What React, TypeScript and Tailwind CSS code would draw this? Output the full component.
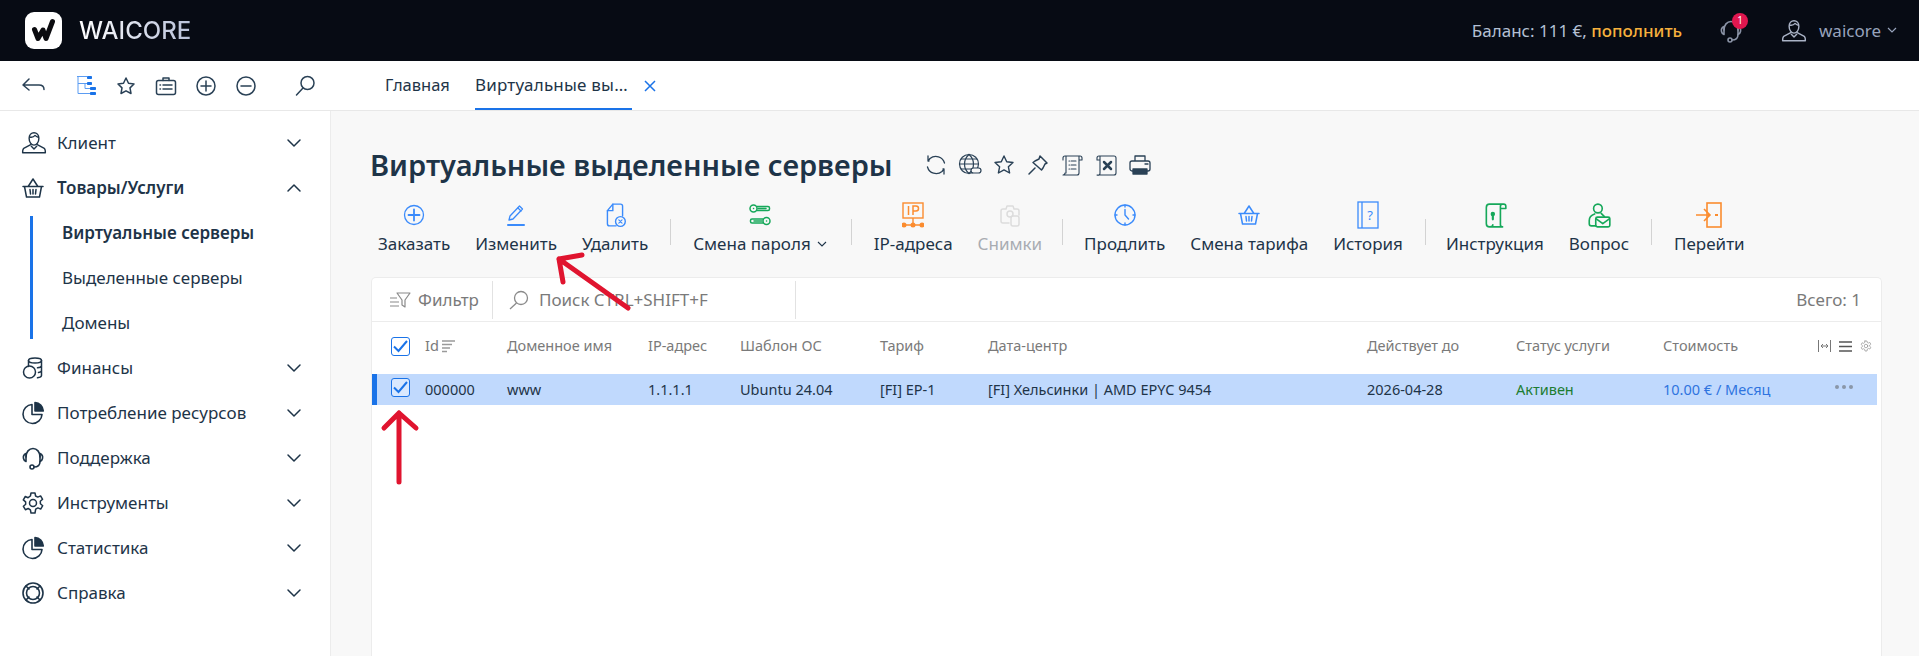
import React from "react";

const S = ({ size = 24, vb = "0 0 24 24", sw = 1.5, className = "", children }: { size?: number; vb?: string; sw?: number; className?: string; children: React.ReactNode }) => (
  <svg width={size} height={size} viewBox={vb} fill="none" stroke="currentColor" strokeWidth={sw} strokeLinecap="round" strokeLinejoin="round" className={className}>
    {children}
  </svg>
);

const Chevron = ({ up = false }: { up?: boolean }) => (
  <svg width="16" height="10" viewBox="0 0 16 10" fill="none" stroke="#1e3448" strokeWidth="1.5" strokeLinecap="round" strokeLinejoin="round">
    <path d={up ? "M2 8 8 2l6 6" : "M2 2l6 6 6-6"} />
  </svg>
);

const UserIcon = ({ size = 26 }: { size?: number }) => (
  <S size={size} sw={1.300}>
    <path d="M7.500 7.500C7.500 4.500 9.500 2.500 12 2.500s4.500 2 4.500 5c0 3.500-2 6.500-4.500 6.500s-4.500-3-4.500-6.500Z" />
    <path d="M8 6.500c2 .5 4-.3 5-1.500 .8 1 2 1.500 3 1.700" />
    <path d="M9 13.500 2.500 17c-.8.500-1 2-1 4h21c0-2-.2-3.500-1-4L15 13.500" />
    <path d="M9.500 15l2.500 2.500 2.500-2.500" />
  </S>
);

const BasketIcon = ({ size = 24 }: { size?: number }) => (
  <S size={size} sw={1.500}>
    <path d="M2 10.500h20M3.500 10.500 5.500 21h13l2-10.500" />
    <path d="M7.500 10 12 3l4.500 7" />
    <path d="M9 13.500l.5 4.500M12 13.500V18M15 13.500l-.5 4.500" />
  </S>
);

const Coins = () => (
  <S size={24} sw={1.500}>
    <ellipse cx="14" cy="4.500" rx="6.500" ry="2.500" />
    <path d="M7.500 4.500v6M20.500 4.500v15c0 1.200-2 2-4 2.300M20.500 9.500c0 1-1.500 2-4 2.300M20.500 14.500c0 1-1.500 1.700-3 2" />
    <circle cx="8.500" cy="16" r="6" />
  </S>
);

const PieIcon = () => (
  <S size={24} sw={1.600}>
    <path d="M11 3.500A9.500 9.500 0 1 0 21 13.500H11Z" />
    <path d="M14 1.500c4.500.3 8 4 8.300 8.500H14Z" fill="currentColor" />
  </S>
);

const Headset = ({ size = 24 }: { size?: number }) => (
  <S size={size} sw={1.600}>
    <path d="M5 11C5 6 8 2.500 12 2.500S19 6 19 11" />
    <path d="M5 7.500c-2 1-3 3-2.500 5 .3 1.500 1.200 2.500 2.500 3V7.500ZM19 7.500c2 1 3 3 2.500 5-.3 1.500-1.200 2.500-2.500 3V7.500Z" />
    <path d="M19 15.500c0 3.500-2.500 5.500-6 5.500" />
    <circle cx="11" cy="21" r="2" />
  </S>
);

const Gear = ({ size = 24, sw = 1.500 }: { size?: number; sw?: number }) => (
  <S size={size} sw={sw}>
    <circle cx="12" cy="12" r="3.500" />
    <path d="M10 2h4l.6 3 2.200 1.100 2.800-1.200 2 3.400-2.300 2 .1 2.400 2.300 2-2 3.400-2.800-1.200-2.200 1.300L14 22h-4l-.6-3.200-2.200-1.300-2.800 1.200-2-3.400 2.300-2-.1-2.400-2.300-2 2-3.400 2.800 1.200L9.400 5 10 2Z" />
  </S>
);

const Ring = () => (
  <S size={24} sw={1.600}>
    <circle cx="12" cy="12" r="10" />
    <circle cx="12" cy="12" r="6.500" />
    <path d="M5 5l3 3M19 5l-3 3M5 19l3-3M19 19l-3-3" />
  </S>
);

const NavItem = ({ icon, label, open = false, bold = false }: { icon: React.ReactNode; label: string; open?: boolean; bold?: boolean }) => (
  <div className="flex h-[45px] items-center pl-[21px] pr-[28px] text-[#1e3448]">
    <div className="flex w-[36px] shrink-0 items-center">{icon}</div>
    <span className={`flex-1 text-[17px] ${bold ? "font-semibold" : ""}`}>{label}</span>
    <Chevron up={open} />
  </div>
);

const Sidebar = () => (
  <aside className="w-[331px] shrink-0 border-r border-[#ececec] bg-white pt-[9px]">
    <NavItem icon={<UserIcon />} label="Клиент" />
    <NavItem icon={<BasketIcon />} label="Товары/Услуги" open bold />
    <div className="mb-[6px] ml-[30px] mt-[6px] flex flex-col gap-[12px] border-l-[3px] border-[#1a73e8] pl-[29px] text-[17px] text-[#1e3448]">
      <div className="flex h-[33px] items-center font-semibold">Виртуальные серверы</div>
      <div className="flex h-[33px] items-center">Выделенные серверы</div>
      <div className="flex h-[33px] items-center">Домены</div>
    </div>
    <NavItem icon={<Coins />} label="Финансы" />
    <NavItem icon={<PieIcon />} label="Потребление ресурсов" />
    <NavItem icon={<Headset />} label="Поддержка" />
    <NavItem icon={<Gear />} label="Инструменты" />
    <NavItem icon={<PieIcon />} label="Статистика" />
    <NavItem icon={<Ring />} label="Справка" />
  </aside>
);

const TopBar = () => (
  <header className="flex h-[61px] items-center bg-[#070b14] pl-[25px] pr-[22px]">
    <svg width="37" height="37" viewBox="0 0 37 37">
      <rect width="37" height="37" rx="9" fill="#fff" />
      <path d="M9.500 17.500 13 26.500 18 18l3 8.500 6.500-17" fill="none" stroke="#0b0b0f" strokeWidth="5" strokeLinejoin="round" strokeLinecap="round" />
    </svg>
    <span className="ml-[17px] bg-gradient-to-r from-white to-[#b9c2da] bg-clip-text text-[24px] font-medium text-transparent [font-family:Inter,sans-serif]">WAICORE</span>
    <div className="ml-auto flex items-center">
      <span className="text-[17px] text-[#b4c0d4]">
        Баланс: 111 €, <span className="font-medium text-[#f6b13d]">пополнить</span>
      </span>
      <div className="relative ml-[37px] text-[#8a93a6]">
        <Headset size={24} />
        <span className="absolute -right-[5px] -top-[6px] flex h-[16px] w-[16px] items-center justify-center rounded-full bg-[#e0174f] text-[10px] text-white">1</span>
      </div>
      <div className="ml-[38px] text-[#aab3c6]"><UserIcon size={26} /></div>
      <span className="ml-[12px] text-[17px] text-[#97a3bc]">waicore</span>
      <svg className="ml-[6px]" width="10" height="7" viewBox="0 0 10 7" fill="none" stroke="#97a3bc" strokeWidth="1.200"><path d="M1 1l4 4 4-4" /></svg>
    </div>
  </header>
);

const NavBar = () => (
  <div className="flex h-[50px] items-center border-b border-[#e8e8e8] bg-white pl-[22px] text-[#2a4156]">
    <S size={24} sw={1.500}><path d="M7 5 1 11l6 5M1 11h16c3 0 5 1.500 5 4.500" /></S>
    <div className="ml-[28px] flex w-[24px] justify-center">
      <svg width="20" height="19" viewBox="0 0 20 19" fill="none" stroke="#5b9cf2" strokeWidth="1">
        <path d="M1 .5h10M2 .5v17h12M2 7.500h9M9 7.500v5h5" />
        <rect x="11" y="0" width="5" height="3" rx=".8" fill="#1a73e8" stroke="none" />
        <rect x="11" y="6" width="5" height="3" rx=".8" fill="#1a73e8" stroke="none" />
        <rect x="14" y="11" width="6" height="3" rx=".8" fill="#1a73e8" stroke="none" />
        <rect x="14" y="16" width="6" height="3" rx=".8" fill="#1a73e8" stroke="none" />
      </svg>
    </div>
    <div className="ml-[16px]"><S size={24} sw={1.500}><path d="M12 4l2.500 5.300 5.500.7-4 3.900 1 5.600-5-2.700-5 2.700 1-5.600-4-3.900 5.500-.7Z" /></S></div>
    <div className="ml-[16px]"><S size={24} sw={1.500}><rect x="2.500" y="6.500" width="19" height="14" rx="2" /><path d="M9 6.500V4h6v2.500M6 11h.5M9 11h9M6 15h.5M9 15h9" /></S></div>
    <div className="ml-[16px]"><S size={24} sw={1.500}><circle cx="12" cy="12" r="9" /><path d="M12 7v10M7 12h10" /></S></div>
    <div className="ml-[16px]"><S size={24} sw={1.500}><circle cx="12" cy="12" r="9" /><path d="M7 12h10" /></S></div>
    <div className="ml-[35px]"><S size={24} sw={1.500}><circle cx="14.500" cy="9" r="6.500" /><path d="M10 14 3.500 21" /></S></div>
    <div className="ml-[68px] flex h-full items-stretch text-[16.500px]">
      <div className="flex items-center text-[#1e3448]">Главная</div>
      <div className="ml-[25px] flex w-[157px] items-center whitespace-nowrap border-b-2 border-[#1a73e8] text-[17px] tracking-[0.2px] text-[#1e3448]">Виртуальные вы…</div>
      <div className="ml-[12px] flex items-center text-[#1a73e8]">
        <svg width="12" height="12" viewBox="0 0 12 12" stroke="currentColor" strokeWidth="1.500"><path d="M1 1l10 10M11 1 1 11" /></svg>
      </div>
    </div>
  </div>
);

const B = "#3b8bfb";
const G = "#16a85a";
const O = "#fb8c2f";

const Tool = ({ icon, label, muted = false, chev = false }: { icon: React.ReactNode; label: string; muted?: boolean; chev?: boolean }) => (
  <div className="flex flex-col items-center">
    <div className="flex h-[28px] items-center justify-center">{icon}</div>
    <div className={`mt-[3px] flex items-center gap-[6px] text-[17px] leading-[24px] ${muted ? "text-[#a8acb2]" : "text-[#1e3448]"}`}>
      {label}
      {chev && <svg width="10" height="7" viewBox="0 0 10 7" fill="none" stroke="#1e3448" strokeWidth="1.100"><path d="M1 1l4 4 4-4" /></svg>}
    </div>
  </div>
);

const Sep = ({ m = "mx-[-3px]" }: { m?: string }) => <div className={`${m} mt-[18px] h-[26px] w-px bg-[#d3d3d3]`} />;

const Toolbar = () => (
  <div className="mt-[18px] flex gap-[25px] pl-[7px]">
    <Tool label="Заказать" icon={<span style={{ color: B }}><S size={24} sw={1.300}><circle cx="12" cy="12" r="9.500" /><path d="M12 6.500v11M6.500 12h11" strokeWidth="1.800" /></S></span>} />
    <Tool label="Изменить" icon={<span style={{ color: B }}><S size={24} sw={1.300}><path d="M5 17l1-4L15.500 3l3 3L9 16Z" /><path d="M14 5l3 3" /><path d="M4 22h16" strokeWidth="2" /></S></span>} />
    <Tool label="Удалить" icon={<span style={{ color: B }}><S size={26} sw={1.300}><path d="M13 22H7a2 2 0 0 1-2-2V8l5-6h7a2 2 0 0 1 2 2v9" /><path d="M5 8h5V2" /><circle cx="17" cy="18" r="4.500" /><path d="M15.500 16.500l3 3M18.500 16.500l-3 3" strokeWidth="1" /></S></span>} />
    <Sep />
    <Tool label="Смена пароля" chev icon={<span style={{ color: G }}><S size={24} sw={1.500}><circle cx="5.500" cy="5.500" r="3.500" /><path d="M9 3.500h11a1.500 1.500 0 0 1 1.500 1.500v1a1.500 1.500 0 0 1-1.500 1.500H9M5.500 5.500h.1M10 5.500h8" /><circle cx="18.500" cy="18" r="3.500" /><path d="M15 16H4a1.500 1.500 0 0 0-1.500 1.500v1A1.500 1.500 0 0 0 4 20h11M18.500 18h.1M6 18h8" /></S></span>} />
    <Sep m="ml-[-1px] mr-[-3px]" />
    <Tool label="IP-адреса" icon={
      <svg width="22" height="26" viewBox="0 0 22 26" fill="none" stroke={O} strokeWidth="1.400">
        <rect x="1" y="1" width="20" height="15" />
        <path d="M6.500 4v9M11 13V4h3a2.500 2.500 0 0 1 0 5h-3" strokeWidth="1.500" />
        <path d="M11 16v7M1 23h20" />
        <circle cx="2" cy="23" r="1.800" fill={O} /><circle cx="11" cy="23" r="1.800" fill={O} /><circle cx="20" cy="23" r="1.800" fill={O} />
      </svg>} />
    <Tool label="Снимки" muted icon={<span className="text-[#dcdcdc]"><S size={24} sw={1.500}><path d="M11 20H5a2 2 0 0 1-2-2V8a2 2 0 0 1 2-2h3l1-3h6l1 3h3a2 2 0 0 1 2 2v4" /><circle cx="12" cy="11" r="3" /><rect x="13" y="13" width="8" height="10" rx="2" /></S></span>} />
    <Sep m="ml-[-5px] mr-[-4px]" />
    <Tool label="Продлить" icon={<span style={{ color: B }}><S size={24} sw={1.400}><circle cx="12" cy="12" r="10" /><path d="M12 6.500V12l3.500 4M12 2v2M12 20v2M2 12h2M20 12h2" /></S></span>} />
    <Tool label="Смена тарифа" icon={<span style={{ color: B }}><BasketIcon size={24} /></span>} />
    <Tool label="История" icon={
      <svg width="22" height="28" viewBox="0 0 22 28" fill="none" stroke={B} strokeWidth="1.300">
        <rect x="1" y="1" width="20" height="26" /><path d="M5 1v26" />
        <text x="13" y="19" fontSize="13" textAnchor="middle" fill={B} stroke="none" fontFamily="Noto Sans">?</text>
      </svg>} />
    <Sep m="ml-[-3px] mr-[-5px]" />
    <Tool label="Инструкция" icon={<span style={{ color: G }}><S size={26} sw={1.500}><path d="M20 2H7a3 3 0 0 0-3 3v15a3 3 0 0 0 3 3h12a2 2 0 0 1-2-2V4a2 2 0 0 1 2-2Zm0 0a2 2 0 0 1 2 2v2h-5M7 23c2 0 3-1 3-2" /><circle cx="10" cy="11" r="1.300" fill="currentColor" /><path d="M10 12v4" strokeWidth="2" /></S></span>} />
    <Tool label="Вопрос" icon={<span style={{ color: G }}><S size={26} sw={1.500}><circle cx="11" cy="6" r="4" /><path d="M8 11c-3 1-5 3-5 6v3a2 2 0 0 0 2 2h4M14 10.500l3 3" /><rect x="9" y="14" width="13" height="9" rx="1.500" /><path d="M9.500 15.500 15.500 20l6-4.500" /></S></span>} />
    <Sep />
    <Tool label="Перейти" icon={
      <svg width="28" height="26" viewBox="0 0 28 26" fill="none" stroke={O} strokeWidth="1.600">
        <rect x="12" y="1" width="14" height="24" /><path d="M1 13h14M9 7l6 6-6 6" />
        <path d="M20 13h3" strokeWidth="2" />
      </svg>} />
  </div>
);

const GRID = "grid grid-cols-[53px_82px_141px_92px_140px_108px_379px_149px_147px_1fr_70px] items-center";

const Check = () => (
  <div className="flex h-[19px] w-[19px] items-center justify-center rounded-[3px] border border-[#1a73e8] bg-white/40">
    <svg width="15" height="13" viewBox="0 0 15 13" fill="none" stroke="#1a73e8" strokeWidth="2"><path d="M1 6.500 5.500 11 14 1" /></svg>
  </div>
);

const Table = () => (
  <div className="mt-[21px] flex-1 rounded-t-[5px] border border-b-0 border-[#ececec] bg-white">
    <div className="flex h-[44px] items-center border-b border-[#ececec] text-[17px] text-[#7a7a7a]">
      <svg className="ml-[18px]" width="21" height="20" viewBox="0 0 21 20" fill="none" stroke="#8a8a8a" strokeWidth="1.200" strokeLinejoin="round">
        <path d="M7 3h13l-5 7v7l-3-2v-5ZM0 8h7M0 12h9M0 16h9" />
      </svg>
      <span className="ml-[7px]">Фильтр</span>
      <div className="ml-[13px] h-[38px] w-px bg-[#e2e2e2]" />
      <svg className="ml-[16px]" width="20" height="20" viewBox="0 0 20 20" fill="none" stroke="#8a8a8a" strokeWidth="1.300">
        <circle cx="12" cy="8" r="6.500" /><path d="M7.500 13 1 19" />
      </svg>
      <span className="ml-[10px] w-[256px] whitespace-nowrap">Поиск CTRL+SHIFT+F</span>
      <div className="h-[38px] w-px bg-[#e2e2e2]" />
      <span className="ml-auto mr-[20px]">Всего: 1</span>
    </div>
    <div className={`${GRID} h-[52px] pb-[4px] text-[14.500px] text-[#7a7a7a]`}>
      <div className="pl-[19px]"><Check /></div>
      <div className="flex items-center gap-[3px]">
        Id
        <svg width="13" height="13" viewBox="0 0 13 13" stroke="#9a9a9a" strokeWidth="1.300"><path d="M0 1h13M0 4.500h10M0 8h8M0 11.500h5" /></svg>
      </div>
      <div>Доменное имя</div>
      <div>IP-адрес</div>
      <div>Шаблон ОС</div>
      <div>Тариф</div>
      <div>Дата-центр</div>
      <div>Действует до</div>
      <div>Статус услуги</div>
      <div>Стоимость</div>
      <div className="flex items-center justify-end gap-[8px] pr-[9px]">
        <svg width="13" height="12" viewBox="0 0 13 12" fill="none" stroke="#777" strokeWidth="1"><path d="M.5 0v12M12.500 0v12M3 6h7M3 6l2-2M3 6l2 2M10 6 8 4M10 6 8 8" /></svg>
        <svg width="13" height="11" viewBox="0 0 13 11" stroke="#555" strokeWidth="1.400"><path d="M0 1h13M0 5.500h13M0 10h13" /></svg>
        <span className="text-[#888]"><Gear size={12} sw={1.300} /></span>
      </div>
    </div>
    <div className={`${GRID} mr-[4px] h-[31px] border-l-[5px] border-[#1a73e8] bg-[#c0d9fd] text-[14.500px] text-[#1e3448]`}>
      <div className="-ml-[5px] -mt-[4px] pl-[19px]"><Check /></div>
      <div className="-ml-[5px]">000000</div>
      <div className="-ml-[5px]">www</div>
      <div className="-ml-[5px]">1.1.1.1</div>
      <div className="-ml-[5px]">Ubuntu 24.04</div>
      <div className="-ml-[5px]">[FI] EP-1</div>
      <div className="-ml-[5px]">[FI] Хельсинки | AMD EPYC 9454</div>
      <div className="-ml-[5px]">2026-04-28</div>
      <div className="-ml-[5px] text-[#1d7d32]">Активен</div>
      <div className="-ml-[5px] whitespace-nowrap text-[#2f74e0]">10.00 € / Месяц</div>
      <div className="-mt-[5px] flex justify-end gap-[3px] pr-[24px]">
        <i className="h-[4px] w-[4px] rounded-full bg-[#8a97a8]" />
        <i className="h-[4px] w-[4px] rounded-full bg-[#8a97a8]" />
        <i className="h-[4px] w-[4px] rounded-full bg-[#8a97a8]" />
      </div>
    </div>
  </div>
);

export default function App() {
  return (
    <div className="relative flex h-[656px] w-[1919px] flex-col overflow-hidden bg-white [font-family:'Noto_Sans',sans-serif]">
      <TopBar />
      <NavBar />
      <div className="flex min-h-0 flex-1">
        <Sidebar />
        <main className="flex flex-1 flex-col bg-[#f8f8f8] pl-[40px] pr-[37px] pt-[36px]">
          <div className="flex items-center">
            <h1 className="-ml-[1px] text-[29px] font-semibold leading-[36px] text-[#1e3448]">Виртуальные выделенные серверы</h1>
            <div className="ml-[31px] flex items-center gap-[10px] text-[#2a4156]">
              <S size={24} sw={1.300}><path d="M20.500 10A9 9 0 0 0 6 5.500L4 8M3.500 14A9 9 0 0 0 18 18.500l2-2.500M4 3v5h1M20 21v-5h-1" /></S>
              <S size={24} sw={1.200}><circle cx="11" cy="11" r="9.500" /><path d="M1.500 11h19M11 1.500c-6 5-6 14 0 19M11 1.500c6 5 6 14 0 19M3 6h16M3 16h10" /><rect x="13" y="15" width="10" height="5" rx="2.500" fill="#f8f8f8" /></S>
              <S size={24} sw={1.400}><path d="M12 3l2.700 5.700 6.300.8-4.600 4.300 1.200 6.200-5.600-3.100L6.400 20l1.200-6.200L3 9.500l6.300-.8Z" /></S>
              <S size={24} sw={1.500}><path d="M14 3l7 7-2 1-2 4-1.500 2L7 9.500l2-1.500 4-2ZM9 15 3 21" /></S>
              <S size={24} sw={1.100}><path d="M5 3h15a2 2 0 0 1 2 2v2h-3M5 3a2 2 0 0 0-2 2v2M5 3h1v17M19 3v17a2 2 0 0 1-2 2H3a2 2 0 0 0 2-2M9 8h.5M11 8h5M9 12h.5M11 12h5M9 16h.5M11 16h5" /></S>
              <S size={24} sw={1.100}><path d="M5 3h15a2 2 0 0 1 2 2v15a2 2 0 0 1-2 2H3a2 2 0 0 0 3-2V3ZM5 3a2 2 0 0 0-2 2v2h3" /><path d="M10 9l7 7M17 9l-7 7" strokeWidth="2.500" /></S>
              <S size={24} sw={1.300}><path d="M7 8V3h10v5M7 18H4a2 2 0 0 1-2-2v-6a2 2 0 0 1 2-2h16a2 2 0 0 1 2 2v6a2 2 0 0 1-2 2h-3" /><rect x="5" y="16" width="14" height="5" fill="currentColor" /><path d="M17 11h3" /></S>
            </div>
          </div>
          <Toolbar />
          <Table />
        </main>
      </div>
      <svg className="pointer-events-none absolute left-0 top-0" width="1919" height="656" fill="none" stroke="#e0142f" strokeWidth="5" strokeLinecap="round" strokeLinejoin="round">
        <path d="M628 308 559 259M559 259 582 255M559 259 563 282" />
        <path d="M399 482V413M399 413 384 428M399 413 416 428" />
      </svg>
    </div>
  );
}
